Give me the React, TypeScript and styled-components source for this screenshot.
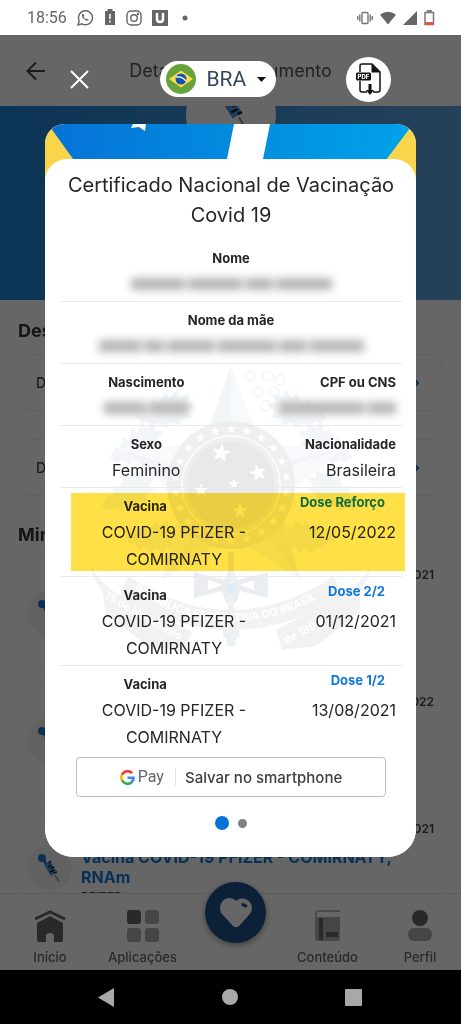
import React from "react";
import styled, { createGlobalStyle, css } from "styled-components";

const GlobalStyle = createGlobalStyle`
  *, *::before, *::after { box-sizing: border-box; }
  body { margin: 0; background: #000; font-family: Inter, "Liberation Sans", sans-serif; color: #262626; }
  h1, h2, h3, p, dl, dd, ul { margin: 0; padding: 0; }
  button { font: inherit; color: inherit; background: none; border: 0; padding: 0; cursor: pointer; }
  svg { display: block; flex: none; }
`;

const Phone = styled.div`
  display: flex;
  flex-direction: column;
  height: 100vh;
  min-height: 640px;
`;

/* Status bar */
const StatusBar = styled.header`
  display: flex;
  align-items: center;
  justify-content: space-between;
  height: 35px;
  flex: none;
  padding: 0 26px 0 27px;
  background: #fff;
  color: #666;
  font: 400 16px Roboto, sans-serif;
`;
const StatusGroup = styled.div<{ $gap: number }>`
  display: flex;
  align-items: center;
  gap: ${(p) => p.$gap}px;
`;

/* Page under the dialog */
const Screen = styled.div`
  position: relative;
  flex: 1;
  min-height: 0;
  display: flex;
  flex-direction: column;
  background: #fff;
`;
const TopBar = styled.div`
  display: flex;
  align-items: center;
  justify-content: center;
  height: 71px;
  flex: none;
  padding: 0 26px;
`;
const BackButton = styled.button`
  width: 20px;
`;
const PageTitle = styled.h1`
  flex: 1;
  text-align: center;
  font: 400 18px Inter, sans-serif;
  font-optical-sizing: none;
  color: #555;
`;
const Spacer = styled.div`
  width: 20px;
`;
const Hero = styled.div`
  display: flex;
  justify-content: center;
  height: 194px;
  flex: none;
  overflow: hidden;
  background: linear-gradient(90deg, #1e82d7, #5fa5e0);
`;
const HeroBadge = styled.div`
  display: flex;
  justify-content: center;
  width: 90px;
  height: 90px;
  margin-top: -36px;
  padding-top: 12px;
  border-radius: 50%;
  background: #fff;
`;
const Feed = styled.main`
  flex: 1;
  min-height: 0;
  overflow: hidden;
  padding: 20px 18px 0;
`;
const SectionTitle = styled.h2`
  font-size: 18px;
  line-height: 22px;
  margin-bottom: 12px;
  color: #333;
`;
const LinkCard = styled.a`
  display: flex;
  align-items: center;
  justify-content: space-between;
  height: 57px;
  padding: 0 23px 0 17px;
  margin-bottom: 28px;
  border: 1px solid #f0f0f0;
  border-radius: 12px;
  font-size: 14px;
  font-weight: 500;
  color: #444;
  text-decoration: none;
`;
const DoseCard = styled.article`
  display: flex;
  gap: 9px;
  height: 111px;
  padding: 8px;
  margin-bottom: 16px;
  border: 1px solid #f5f5f5;
  border-radius: 12px;
`;
const DoseIcon = styled.div`
  align-self: center;
  width: 45px;
  height: 45px;
  border-radius: 50%;
  background: #f3f3f3;
  display: grid;
  place-items: center;
  flex: none;
`;
const DoseInfo = styled.div`
  flex: 1;
  font-size: 12px;
  line-height: 16px;
  font-weight: 600;
  color: #444;
`;
const DoseDate = styled.p`
  text-align: right;
  margin-bottom: 10px;
`;
const DoseName = styled.h3`
  font-size: 16px;
  line-height: 20px;
  font-weight: 700;
  font-optical-sizing: none;
  color: #1478d2;
  margin-bottom: 2px;
`;
const TabBar = styled.nav`
  display: flex;
  justify-content: space-between;
  height: 77px;
  flex: none;
  padding: 16px 6px 0 15px;
  background: #fff;
  border-top: 1px solid #e8e8e8;
`;
const Tab = styled.button`
  display: flex;
  flex-direction: column;
  align-items: center;
  gap: 7px;
  width: 70px;
  height: 56px;
  font-size: 13px;
  line-height: 16px;
  font-weight: 500;
  color: #666;
`;
const HeartTab = styled.button`
  width: 61px;
  height: 61px;
  margin: -28px 4px 0 5px;
  border-radius: 50%;
  background: #205089;
  display: grid;
  place-items: center;
  box-shadow: 0 2px 6px rgba(0, 0, 0, 0.4);
`;

/* Dialog */
const Overlay = styled.div`
  position: absolute;
  inset: 0;
  overflow: auto;
  scrollbar-width: none;
  padding: 20px 45px;
  background: rgba(0, 0, 0, 0.6);
`;
const Controls = styled.div`
  display: flex;
  align-items: center;
  justify-content: space-between;
  height: 48px;
  padding: 0 25px;
  margin-bottom: 21px;
`;
const CountryPicker = styled.label`
  display: flex;
  align-items: center;
  height: 36px;
  padding: 0 10px 0 6px;
  border-radius: 18px;
  background: #fff;
`;
const CountrySelect = styled.select`
  appearance: none;
  width: 50px;
  margin-left: 11px;
  padding: 0;
  border: 0;
  background: none;
  font: 400 21px Roboto, sans-serif;
  color: #34465c;
`;
const PdfButton = styled.button`
  width: 45px;
  height: 45px;
  border-radius: 50%;
  background: #fff;
  display: grid;
  place-items: center;
`;
const Certificate = styled.section`
  overflow: hidden;
  border-radius: 20px 20px 28px 28px;
  background: #fff;
`;
const Cover = styled.svg`
  width: 100%;
  height: 60px;
`;
const Body = styled.div`
  position: relative;
  margin-top: -25px;
  padding: 11px 14px 27px 15px;
  border-radius: 22px 22px 0 0;
  background: #fff;
`;
const Title = styled.h2`
  text-align: center;
  font-size: 20px;
  line-height: 30px;
  font-weight: 400;
  font-optical-sizing: none;
  margin-bottom: 10px;
`;
const Records = styled.div`
  position: relative;
`;
const Watermark = styled.svg`
  position: absolute;
  top: 120px;
  left: 50%;
  margin-left: -145px;
`;
const Row = styled.dl<{ $last?: boolean; $marked?: boolean }>`
  position: relative;
  display: flex;
  padding: 5px 0 3px;
  border-bottom: 1px solid ${(p) => (p.$last ? "transparent" : "#e9e9e9")};
  ${(p) =>
    p.$marked &&
    css`
      &::after {
        content: "";
        position: absolute;
        inset: 5px -3px 5px 11px;
        background: #ffe147;
        mix-blend-mode: multiply;
      }
    `}
`;
const alignments = {
  start: css`
    padding-left: 3px;
    text-align: center;
  `,
  center: css`
    text-align: center;
  `,
  end: css`
    padding-right: 6px;
    text-align: right;
  `,
};
const Field = styled.div<{ $grow?: number; $side?: keyof typeof alignments }>`
  flex: ${(p) => p.$grow ?? 1} 1 0;
  min-width: 0;
  ${(p) => alignments[p.$side ?? "center"]}
`;
const Label = styled.dt<{ $narrow?: boolean }>`
  width: ${(p) => (p.$narrow ? "74%" : "auto")};
  font-size: 13px;
  line-height: 26px;
  font-weight: 700;
`;
const DoseLabel = styled.dt`
  padding: 0 11px 8px 0;
  font-size: 13px;
  line-height: 18px;
  font-weight: 700;
  color: #0f78d8;
`;
const Value = styled.dd`
  font-size: 16px;
  line-height: 27px;
`;
const Hidden = styled.dd<{ $end?: boolean }>`
  display: flex;
  justify-content: ${(p) => (p.$end ? "flex-end" : "center")};
  align-items: center;
  gap: 3px;
  height: 25px;
  margin-bottom: 2px;
  filter: blur(4px);
`;
const HiddenWord = styled.span<{ $w: number }>`
  width: ${(p) => p.$w}px;
  height: 12px;
  background: #b4b4b4;
`;
const SaveButton = styled.button`
  display: flex;
  align-items: center;
  justify-content: center;
  width: calc(100% - 32px);
  height: 40px;
  margin: 2px 16px 0;
  border: 1px solid #bdbdbd;
  border-radius: 4px;
  font-size: 15px;
  font-weight: 500;
  font-optical-sizing: none;
  color: #3c4043;
`;
const PayWord = styled.span`
  margin-left: 3px;
  padding-right: 11px;
  margin-right: 9px;
  border-right: 1px solid #e4e4e4;
  font: 400 16px/18px Roboto, sans-serif;
  color: #5f6368;
`;
const Pager = styled.div`
  display: flex;
  align-items: center;
  justify-content: center;
  gap: 9px;
  height: 14px;
  margin-top: 19px;
`;
const Dot = styled.button<{ $active?: boolean }>`
  width: ${(p) => (p.$active ? 14 : 9)}px;
  height: ${(p) => (p.$active ? 14 : 9)}px;
  border-radius: 50%;
  background: ${(p) => (p.$active ? "#0773d9" : "#808080")};
`;

/* Android navigation */
const SystemNav = styled.footer`
  display: flex;
  align-items: center;
  justify-content: space-between;
  height: 54px;
  flex: none;
  padding: 0 99px 0 98px;
  background: #000;
`;

const starPoints = (cx: number, cy: number, r: number, inner = 0.4, turn = -90) =>
  Array.from({ length: 10 }, (_, i) => {
    const a = ((turn + i * 36) * Math.PI) / 180;
    const d = i % 2 ? r * inner : r;
    return `${(cx + d * Math.cos(a)).toFixed(1)},${(cy + d * Math.sin(a)).toFixed(1)}`;
  }).join(" ");

const Syringe = ({ size = 30 }: { size?: number }) => (
  <svg width={size} height={size} viewBox="0 0 30 30">
    <circle cx="7" cy="5" r="4" fill="#1f78d0" />
    <path d="M8 6l4 6" stroke="#1f78d0" strokeWidth="3" />
    <path d="M12 10l7 11" stroke="#4f97de" strokeWidth="7" />
    <path d="M14 10l2-2M13 14l3-2M16 15l3-1M15 19l4-2M19 20l3-1" stroke="#222" strokeWidth="1.5" />
    <path d="M20 22l4 7" stroke="#999" strokeWidth="1.5" />
  </svg>
);

const Leaf = ({ x, y, a, s = 1 }: { x: number; y: number; a: number; s?: number }) => (
  <path
    transform={`translate(${x} ${y}) rotate(${a}) scale(${s})`}
    d="M0 0l6-9 3 3 4-10 4 4 5-11 3 5 6-9 2 7 9-5-2 8 8 1-7 6 5 5-9 2 1 6-9-2-2 6-8-4-3 5-6-5-5 2z"
  />
);

const Emblem = () => (
  <Watermark width="290" height="292" viewBox="0 0 290 292" aria-hidden="true">
    <g fill="#f3f6f8">
      <Leaf x={50} y={56} a={8} s={1.2} />
      <Leaf x={24} y={98} a={-8} s={1.2} />
      <Leaf x={16} y={146} a={-10} s={1.2} />
      <Leaf x={40} y={176} a={20} s={1.1} />
      <g transform="translate(290 0) scale(-1 1)">
        <Leaf x={50} y={56} a={8} s={1.2} />
        <Leaf x={24} y={98} a={-8} s={1.2} />
        <Leaf x={16} y={146} a={-10} s={1.2} />
        <Leaf x={40} y={176} a={20} s={1.1} />
      </g>
    </g>
    <g fill="none" stroke="#f0f0f0" strokeWidth="1">
      {[[164, 16], [182, 16], [172, 32], [188, 32], [180, 46], [194, 20]].map(([x, y]) => (
        <circle key={`${x}-${y}`} cx={x} cy={y} r="5" />
      ))}
    </g>
    <polygon points={starPoints(145, 125, 119, 0.42)} fill="#f7f9fa" />
    <path d="M145 6v119L118 88zM258 88L145 125l42-20zM215 221l-70-96 44 14zM75 221l70-96-7 40zM32 88l113 37-45 10z" fill="#f2f5f8" />
    <circle cx="145" cy="125" r="64" fill="#efeff1" />
    <circle cx="145" cy="125" r="49" fill="none" stroke="#fafafa" strokeWidth="2" />
    <circle cx="145" cy="125" r="44" fill="#e9e9eb" />
    {Array.from({ length: 22 }, (_, i) => {
      const a = (i * 2 * Math.PI) / 22;
      return <polygon key={i} points={starPoints(145 + 56 * Math.sin(a), 125 - 56 * Math.cos(a), 5)} fill="#fff" />;
    })}
    <polygon points={starPoints(135, 93, 10, 0.4, -80)} fill="#fff" />
    <polygon points={starPoints(172, 113, 9, 0.4, -105)} fill="#fff" />
    <polygon points={starPoints(148, 124, 6)} fill="#fff" />
    <polygon points={starPoints(115, 130, 7)} fill="#fff" />
    <polygon points={starPoints(154, 151, 8)} fill="#fff" />
    <path d="M4 204c8 16 20 26 38 36l4 14C22 242 8 226 4 204zM286 204c-8 16-20 26-38 36l-4 14c24-12 38-28 42-50z" fill="#f2f3f4" />
    <path d="M42 216Q145 284 248 216l8 20Q145 304 34 236z" fill="#f2f2f3" />
    <path d="M16 226l90 46-8 18-34-2-44-34zM274 226l-84 44 6 20 34-4 44-34z" fill="#f2f2f3" />
    <path d="M108 212l30 8 4-8h6l4 8 30-8v26l-28-7-4 12h-10l-4-12-28 7z" fill="#ebeef0" />
    <path d="M122 220l14 5-14 5zM168 220l-14 5 14 5z" fill="#fff" />
    <path d="M142 192h6v78h5v8h-3l-1 7q-4 4-8 0l-1-7h-3v-8h5z" fill="#eef1f3" />
    <circle cx="145" cy="229" r="5" fill="#dcebfa" />
    <path id="motto" d="M48 230Q145 294 250 228" fill="none" />
    <path id="mottoStart" d="M18 238L100 284" fill="none" />
    <path id="mottoEnd" d="M200 284L262 252" fill="none" />
    <g fill="#fff" fontFamily="Inter, sans-serif" fontWeight="700" fontSize="11">
      <text><textPath href="#motto">REPÚBLICA FEDERATIVA DO BRASIL</textPath></text>
      <text><textPath href="#mottoStart">15 de Novembro</textPath></text>
      <text><textPath href="#mottoEnd">de 1889</textPath></text>
    </g>
  </Watermark>
);

const doses = [
  { dose: "Dose Reforço", date: "12/05/2022", marked: true },
  { dose: "Dose 2/2", date: "01/12/2021" },
  { dose: "Dose 1/2", date: "13/08/2021" },
];

const Redacted = ({ words, end }: { words: number[]; end?: boolean }) => (
  <Hidden $end={end} aria-label="Oculto">
    {words.map((w, i) => (
      <HiddenWord key={i} $w={w} />
    ))}
  </Hidden>
);

export default function App() {
  return (
    <>
      <GlobalStyle />
      <Phone>
        <StatusBar>
          <StatusGroup $gap={10}>
            <span>18:56</span>
            <svg width="17" height="17" viewBox="0 0 17 17" fill="none" stroke="#666" strokeWidth="1.4">
              <path d="M1 16l1.200-4.200A7 7 0 1 1 5 14.800z" />
              <path d="M5.500 4.500c-1.500 1.500-.5 3.500 1.200 5.200s3.800 2.700 5.200 1.200l-1.900-1.500-1 .8c-1-.4-1.900-1.300-2.400-2.400l.9-1z" fill="#666" stroke="none" />
            </svg>
            <svg width="12" height="17" viewBox="0 0 12 17">
              <path d="M3.500 0h5v2H11v14H1V2h2.500z" fill="#666" />
              <path d="M6 5v5M6 11.500v2" stroke="#fff" strokeWidth="1.500" />
            </svg>
            <svg width="16" height="16" viewBox="0 0 16 16" fill="none" stroke="#666" strokeWidth="1.400">
              <rect x="1" y="1" width="14" height="14" rx="4" />
              <circle cx="8" cy="8" r="3.300" />
              <circle cx="12" cy="4" r=".5" fill="#666" />
            </svg>
            <svg width="16" height="16" viewBox="0 0 16 16">
              <path d="M0 0h16v16H0z" fill="#666" />
              <path d="M5 3v6q0 3 3 3t3-3V3" stroke="#fff" strokeWidth="2.500" fill="none" />
            </svg>
            <svg width="17" height="6" viewBox="0 0 17 6"><circle cx="7" cy="3" r="2.500" fill="#666" /></svg>
          </StatusGroup>
          <StatusGroup $gap={7}>
            <svg width="16" height="14" viewBox="0 0 16 14" fill="none" stroke="#777" strokeWidth="1.400">
              <rect x="5" y="1.500" width="6" height="11" rx="1" />
              <path d="M2.800 3.500v7M.7 5v4M13.200 3.500v7M15.300 5v4" />
            </svg>
            <svg width="16" height="14" viewBox="0 0 17 14"><path d="M0 3.500Q8.500-3 17 3.500L8.500 14z" fill="#666" /></svg>
            <svg width="14" height="14" viewBox="0 0 14 14"><path d="M14 0v14H0z" fill="#666" /></svg>
            <svg width="11" height="16" viewBox="0 0 11 16">
              <path d="M1 2.500h8.500v12H1zM3.500 2V.8h3.500V2" fill="none" stroke="#777" strokeWidth="1.500" />
              <path d="M1 12h8.500v3H1z" fill="#d65a48" />
            </svg>
          </StatusGroup>
        </StatusBar>

        <Screen>
          <TopBar>
            <BackButton aria-label="Voltar">
              <svg width="20" height="20" viewBox="0 0 20 20" fill="none" stroke="#444" strokeWidth="2">
                <path d="M19 10H2M10 1.500L1.500 10l8.500 8.500" />
              </svg>
            </BackButton>
            <PageTitle>Detalhes do documento</PageTitle>
            <Spacer />
          </TopBar>
          <Hero>
            <HeroBadge><Syringe size={48} /></HeroBadge>
          </Hero>
          <Feed>
            <SectionTitle>Destaques</SectionTitle>
            <LinkCard href="#documento">
              Documento
              <svg width="7" height="12" viewBox="0 0 7 12" fill="none" stroke="#1478d2" strokeWidth="2"><path d="M1 1l5 5-5 5" /></svg>
            </LinkCard>
            <LinkCard href="#doses">
              Doses
              <svg width="7" height="12" viewBox="0 0 7 12" fill="none" stroke="#1478d2" strokeWidth="2"><path d="M1 1l5 5-5 5" /></svg>
            </LinkCard>
            <SectionTitle>Minhas vacinas</SectionTitle>
            {["01/12/2021", "12/05/2022", "13/08/2021"].map((date) => (
              <DoseCard key={date}>
                <DoseIcon><Syringe /></DoseIcon>
                <DoseInfo>
                  <DoseDate>{date}</DoseDate>
                  <DoseName>Vacina COVID-19 PFIZER - COMIRNATY, RNAm</DoseName>
                  <p>PFIZER</p>
                </DoseInfo>
              </DoseCard>
            ))}
          </Feed>
          <TabBar>
            <Tab>
              <svg width="34" height="32" viewBox="0 0 34 32">
                <path d="M2 9L17 2l15 7" fill="none" stroke="#666" strokeWidth="3" />
                <path d="M4 13l13-7 13 7v17q0 2-2 2h-7v-6q0-3-4-3t-4 3v6H6q-2 0-2-2z" fill="#666" />
                <path d="M2 12L17 5l15 7" fill="none" stroke="#fff" strokeWidth="1.500" />
              </svg>
              Início
            </Tab>
            <Tab>
              <svg width="32" height="32" viewBox="0 0 32 32" fill="#b0b0b0">
                <rect width="14" height="14" rx="3" fill="#666" />
                <rect x="18" width="14" height="14" rx="3" />
                <rect y="18" width="14" height="14" rx="3" />
                <rect x="18" y="18" width="14" height="14" rx="3" />
              </svg>
              Aplicações
            </Tab>
            <HeartTab aria-label="Minha saúde">
              <svg width="34" height="30" viewBox="0 0 34 30">
                <path d="M17 3C12-2 5 0 2.500 5S1 14 4 17l10 11q3 2.500 6 0l10-11c3-3 4-8 1.500-12S22-2 17 3z" fill="#fff" />
                <path d="M22.500 6.500q3.500 0 5 2.500" stroke="#205089" strokeWidth="3" fill="none" />
              </svg>
            </HeartTab>
            <Tab>
              <svg width="26" height="32" viewBox="0 0 26 32">
                <path d="M25 1H4q-3 0-3 3v26" fill="none" stroke="#bbb" strokeWidth="2" />
                <path d="M1 7h24v22q0 2-2 2H3q-2 0-2-2z" fill="#b0b0b0" />
                <path d="M4 8h4v22H4zM11 22h12v5H11z" fill="#666" />
              </svg>
              Conteúdo
            </Tab>
            <Tab>
              <svg width="26" height="32" viewBox="0 0 26 32">
                <circle cx="13" cy="8" r="8" fill="#666" />
                <rect x="1" y="18" width="24" height="13" rx="6" fill="#b0b0b0" />
              </svg>
              Perfil
            </Tab>
          </TabBar>

          <Overlay role="dialog" aria-label="Certificado de vacinação">
            <Controls>
              <button aria-label="Fechar">
                <svg width="19" height="19" viewBox="0 0 19 19" stroke="#fff" strokeWidth="2"><path d="M1 1l17 17M18 1L1 18" /></svg>
              </button>
              <CountryPicker>
                <svg width="30" height="30" viewBox="0 0 30 30" aria-hidden="true">
                  <circle cx="15" cy="15" r="15" fill="#66a33c" />
                  <path d="M3 15l12-8.500L27 15l-12 8.500z" fill="#fddb4a" />
                  <circle cx="15" cy="15" r="5.500" fill="#1454ae" />
                  <path d="M10 13q6-1 10 4" stroke="#fff" strokeWidth="1.300" fill="none" />
                </svg>
                <CountrySelect aria-label="País" defaultValue="BRA">
                  <option>BRA</option>
                </CountrySelect>
                <svg width="9" height="5" viewBox="0 0 9 5"><path d="M0 0h9L4.500 5z" fill="#111" /></svg>
              </CountryPicker>
              <PdfButton aria-label="Baixar PDF">
                <svg width="26" height="32" viewBox="0 0 26 32">
                  <path d="M4 9V3q0-2 2-2h10l8 8v18q0 2-2 2h-5M11 29H6q-2 0-2-2v-9" fill="none" stroke="#111" strokeWidth="1.500" />
                  <path d="M15.500 1l8.500 8.500h-8.500z" fill="#111" />
                  <rect y="9.500" width="15" height="8" rx="1.500" fill="#111" />
                  <text x="7.500" y="16" textAnchor="middle" fontFamily="Inter, sans-serif" fontWeight="800" fontSize="6" fill="#fff">PDF</text>
                  <path d="M12.500 21h3v6h2.500l-4 5-4-5h2.500z" fill="#111" />
                </svg>
              </PdfButton>
            </Controls>

            <Certificate>
              <Cover viewBox="0 0 371 60" preserveAspectRatio="none" aria-hidden="true">
                <defs>
                  <linearGradient id="sky"><stop stopColor="#0573d6" /><stop offset="1" stopColor="#00a2e8" /></linearGradient>
                </defs>
                <path d="M0 0h371v60H0z" fill="#f9d54b" />
                <path d="M3 0h365L323 60H46z" fill="url(#sky)" />
                <path d="M189 0h36l-12 60h-36z" fill="#fff" />
                <path d="M88 0h13l-1 7-6-4-8 1z" fill="#fff" />
              </Cover>
              <Body>
                <Title>Certificado Nacional de Vacinação Covid 19</Title>
                <Records>
                  <Emblem />
                  <Row>
                    <Field><Label>Nome</Label><Redacted words={[54, 54, 28, 56]} /></Field>
                  </Row>
                  <Row>
                    <Field><Label>Nome da mãe</Label><Redacted words={[42, 20, 48, 58, 28, 54]} /></Field>
                  </Row>
                  <Row>
                    <Field $side="start"><Label>Nascimento</Label><Redacted words={[42, 40]} /></Field>
                    <Field $side="end"><Label>CPF ou CNS</Label><Redacted end words={[86, 28]} /></Field>
                  </Row>
                  <Row>
                    <Field $side="start"><Label>Sexo</Label><Value>Feminino</Value></Field>
                    <Field $side="end"><Label>Nacionalidade</Label><Value>Brasileira</Value></Field>
                  </Row>
                  {doses.map((d, i) => (
                    <Row key={d.dose} $marked={d.marked} $last={i === doses.length - 1}>
                      <Field $grow={2} $side="start">
                        <Label $narrow>Vacina</Label>
                        <Value>COVID-19 PFIZER -<br />COMIRNATY</Value>
                      </Field>
                      <Field $grow={1} $side="end">
                        <DoseLabel>{d.dose}</DoseLabel>
                        <Value>{d.date}</Value>
                      </Field>
                    </Row>
                  ))}
                </Records>
                <SaveButton>
                  <svg width="15" height="15" viewBox="0 0 15 15" fill="none" strokeWidth="2.600">
                    <path d="M12.200 3.200A6.200 6.200 0 0 0 2 4.800" stroke="#ea4335" />
                    <path d="M2 4.700a6.200 6.200 0 0 0 0 5.600" stroke="#fbbc04" />
                    <path d="M2 10.200a6.200 6.200 0 0 0 9.700 2" stroke="#34a853" />
                    <path d="M11.500 12.300a6 6 0 0 0 2-4.600H7.500" stroke="#4285f4" />
                  </svg>
                  <PayWord>Pay</PayWord>
                  Salvar no smartphone
                </SaveButton>
                <Pager>
                  <Dot $active aria-label="Página 1" />
                  <Dot aria-label="Página 2" />
                </Pager>
              </Body>
            </Certificate>
          </Overlay>
        </Screen>

        <SystemNav>
          <button aria-label="Voltar do sistema">
            <svg width="17" height="19" viewBox="0 0 17 19"><path d="M16 0v19L0 9.500z" fill="#a8a8a8" /></svg>
          </button>
          <button aria-label="Tela inicial">
            <svg width="16" height="16" viewBox="0 0 16 16"><circle cx="8" cy="8" r="8" fill="#a8a8a8" /></svg>
          </button>
          <button aria-label="Recentes">
            <svg width="17" height="17" viewBox="0 0 17 17"><rect width="17" height="17" rx="1" fill="#a8a8a8" /></svg>
          </button>
        </SystemNav>
      </Phone>
    </>
  );
}
